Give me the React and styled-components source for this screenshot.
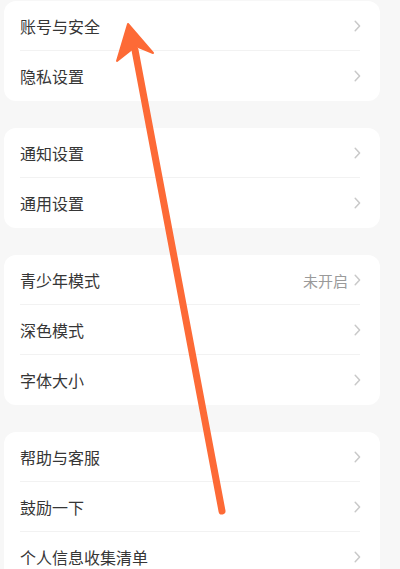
import React from "react";
import styled, { createGlobalStyle } from "styled-components";

const GlobalStyle = createGlobalStyle`
  html, body {
    margin: 0;
    padding: 0;
    background: #f7f7f7;
    font-family: "Noto Sans CJK SC", "Noto Sans", sans-serif;
  }
`;

const groups = [
  [{ label: "账号与安全" }, { label: "隐私设置" }],
  [{ label: "通知设置" }, { label: "通用设置" }],
  [{ label: "青少年模式", value: "未开启" }, { label: "深色模式" }, { label: "字体大小" }],
  [{ label: "帮助与客服" }, { label: "鼓励一下" }, { label: "个人信息收集清单" }],
];

export default function App() {
  return (
    <>
      <GlobalStyle />
      <Page>
        {groups.map((items, gi) => (
          <Card key={gi}>
            {items.map((item, i) => (
              <Row key={item.label} last={i === items.length - 1}>
                <Label>{item.label}</Label>
                <Right>
                  {item.value && <Value>{item.value}</Value>}
                  <Chevron />
                </Right>
              </Row>
            ))}
          </Card>
        ))}
        <Arrow />
      </Page>
    </>
  );
}

function Chevron() {
  return (
    <ChevronIcon width="7" height="12" viewBox="0 0 7 12">
      <path d="M1.2 1.2 L5.6 6 L1.2 10.8" fill="none" stroke="#c9c9c9" strokeWidth="1.5" strokeLinecap="round" strokeLinejoin="round" />
    </ChevronIcon>
  );
}

function Arrow() {
  return (
    <ArrowSvg width="400" height="569" viewBox="0 0 400 569">
      <line x1="135" y1="50" x2="222" y2="511" stroke="#fd6a36" strokeWidth="7" strokeLinecap="round" />
      <path d="M128 24 L153 53 L136 46 L117 61 Z" fill="#fd6a36" stroke="#fd6a36" strokeWidth="2" strokeLinejoin="round" />
    </ArrowSvg>
  );
}

const Page = styled.div`
  position: relative;
  width: 400px;
  height: 569px;
  overflow: hidden;
  padding: 1px 20px 0 4px;
  box-sizing: border-box;
  display: flex;
  flex-direction: column;
  gap: 27px;
`;

const Card = styled.div`
  background: #ffffff;
  border-radius: 12px;
  flex-shrink: 0;
`;

const Row = styled.div`
  position: relative;
  height: 50px;
  display: flex;
  align-items: center;
  justify-content: space-between;
  padding: 0 19px 0 16px;

  &::after {
    content: "";
    display: ${(p) => (p.last ? "none" : "block")};
    position: absolute;
    left: 16px;
    right: 20px;
    bottom: 0;
    height: 1px;
    background: #f2f2f2;
  }
`;

const Label = styled.span`
  font-size: 16px;
  color: #363636;
  letter-spacing: 0;
`;

const Right = styled.div`
  display: flex;
  align-items: center;
  gap: 6px;
`;

const Value = styled.span`
  font-size: 15px;
  color: #9a9a9a;
`;

const ChevronIcon = styled.svg`
  display: block;
`;

const ArrowSvg = styled.svg`
  position: absolute;
  left: 0;
  top: 0;
  pointer-events: none;
`;
